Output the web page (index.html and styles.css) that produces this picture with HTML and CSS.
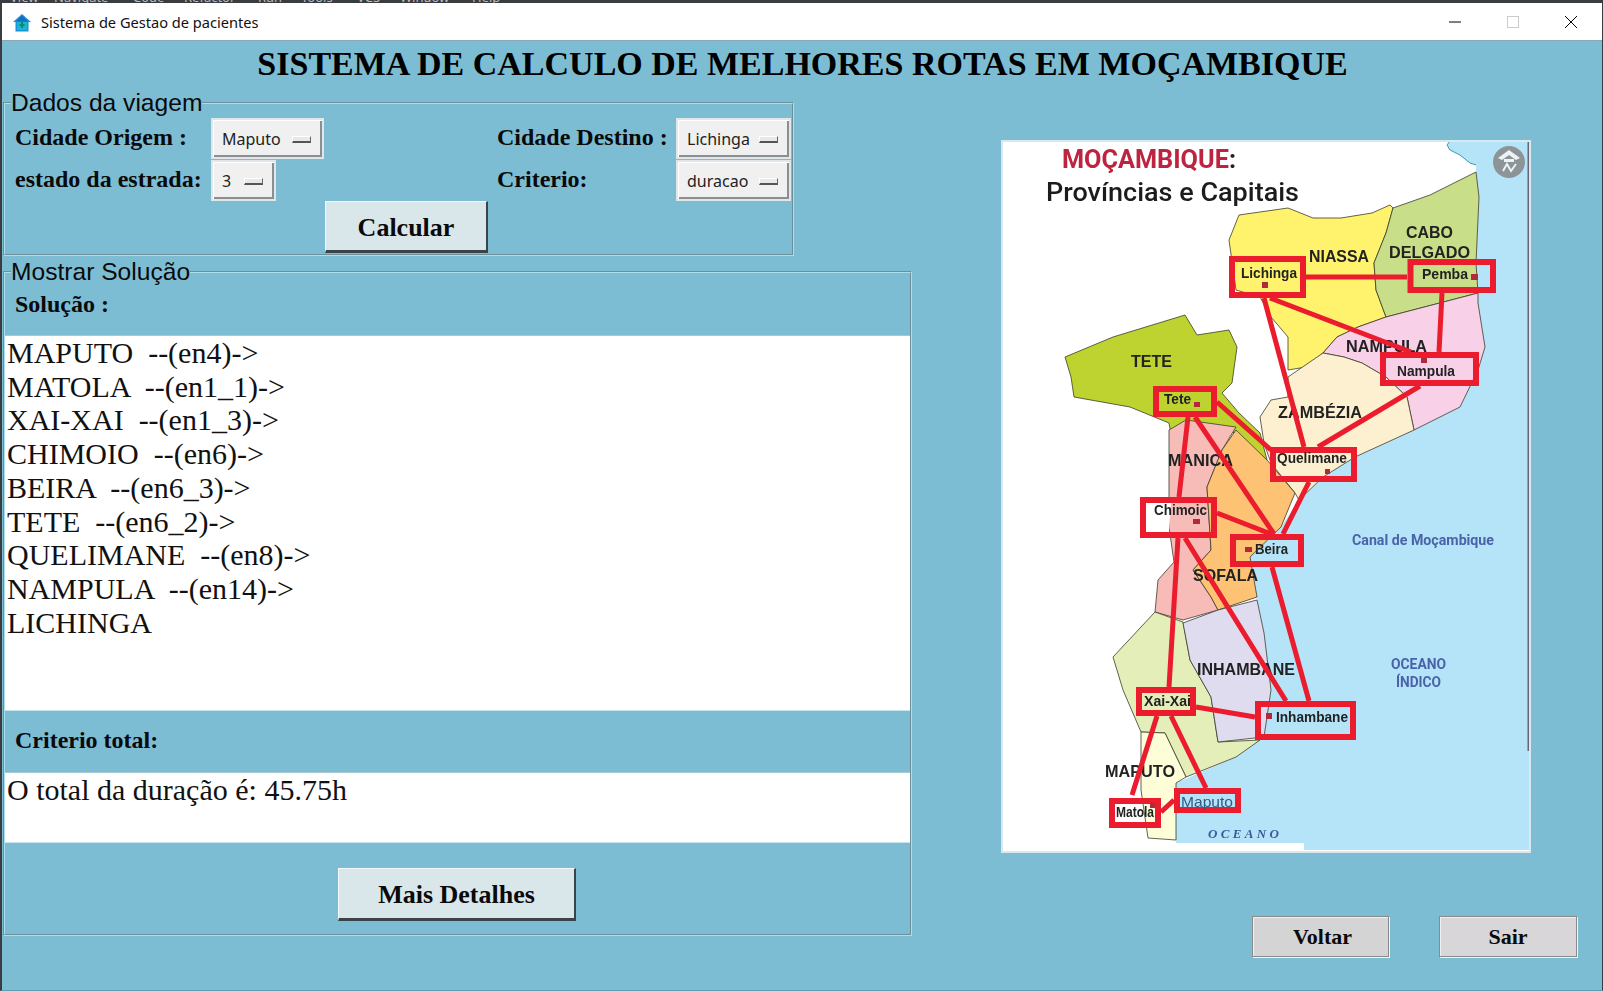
FILE: index.html
```html
<!DOCTYPE html>
<html lang="pt">
<head>
  <meta charset="UTF-8" />
  <title>Sistema de Gestao de pacientes</title>
  <link rel="stylesheet" href="styles.css">
</head>
<body>
<div class="window">

  <!-- IDE menu peeking out behind the window -->
  <div class="behind">
    <span style="width:44px">View</span><span style="width:79px">Navigate</span><span style="width:51px">Code</span><span style="width:74px">Refactor</span><span style="width:43px">Run</span><span style="width:56px">Tools</span><span style="width:43px">VCS</span><span style="width:72px">Window</span><span style="width:70px">Help</span>
  </div>

  <div class="titlebar">
    <svg class="app-icon" viewBox="0 0 18 18">
      <path d="M9 0 L18 8 L15.500 8 L15.500 17.500 L2.500 17.500 L2.500 8 L0 8 Z" fill="#1c8fe0"/>
      <path d="M9 1.500 L15 7.500 L3 7.500 Z" fill="#0f6fc0"/>
      <rect x="4" y="8" width="10" height="8" fill="#18b8c8"/>
      <path d="M9 8 V14 M6.500 11 H11.500" stroke="#0a8a70" stroke-width="2"/>
    </svg>
    <span class="app-name">Sistema de Gestao de pacientes</span>
    <div class="win-controls">
      <svg viewBox="0 0 12 12"><path d="M0 6 H12" stroke="#000" stroke-width="1"/></svg>
      <svg viewBox="0 0 12 12"><rect x="0.500" y="0.500" width="11" height="11" fill="none" stroke="#ccc"/></svg>
      <svg viewBox="0 0 12 12"><path d="M0 0 L12 12 M12 0 L0 12" stroke="#000" stroke-width="1"/></svg>
    </div>
  </div>

  <div class="main">
    <h1 class="page-title">SISTEMA DE CALCULO DE MELHORES ROTAS EM MOÇAMBIQUE</h1>

    <div class="columns">
      <div class="left-col">

        <!-- Dados da viagem -->
        <fieldset class="group group-dados">
          <legend>Dados da viagem</legend>
          <div class="form-grid">
            <label class="lbl">Cidade Origem :</label>
            <div class="optmenu menu-wide"><span>Maputo</span><i class="ind"></i></div>
            <label class="lbl">Cidade Destino :</label>
            <div class="optmenu menu-right"><span>Lichinga</span><i class="ind"></i></div>
            <label class="lbl">estado da estrada:</label>
            <div class="optmenu menu-small"><span>3</span><i class="ind"></i></div>
            <label class="lbl">Criterio:</label>
            <div class="optmenu menu-right"><span>duracao</span><i class="ind"></i></div>
          </div>
          <button class="btn btn-calc">Calcular</button>
        </fieldset>

        <!-- Mostrar Solucao -->
        <fieldset class="group group-solucao">
          <legend>Mostrar Solução</legend>
          <div class="lbl row-solucao">Solução :</div>
          <div class="output output-rota">MAPUTO  --(en4)-&gt;
MATOLA  --(en1_1)-&gt;
XAI-XAI  --(en1_3)-&gt;
CHIMOIO  --(en6)-&gt;
BEIRA  --(en6_3)-&gt;
TETE  --(en6_2)-&gt;
QUELIMANE  --(en8)-&gt;
NAMPULA  --(en14)-&gt;
LICHINGA</div>
          <div class="lbl row-criterio">Criterio total:</div>
          <div class="output output-total">O total da duração é: 45.75h</div>
          <button class="btn btn-detalhes">Mais Detalhes</button>
        </fieldset>
      </div>

      <div class="right-col">
        <svg class="map" viewBox="1002 141 528 711">
          <rect x="1002" y="141" width="528" height="711" fill="#fff"/>
          <polygon fill="#b5e3f8" points="1450,141 1447,145 1450,150 1460,155 1470,163 1476,165 1476,172 1479,197 1476,263 1478,303 1485,347 1478,370 1460,407 1414,430 1355,457 1323,477 1299,500 1281,527 1250,557 1257,600 1264,633 1271,690 1264,737 1236,757 1176,783 1176,843 1304,843 1304,850 1530,850 1530,141"/>

          <g stroke="#3b3b2b" stroke-width="0.800" stroke-linejoin="round">
            <polygon fill="#fff36d" points="1229,240 1239,215 1288,208 1313,218 1341,218 1372,213 1390,205 1393,208 1386,233 1374,263 1376,290 1386,317 1358,327 1337,337 1323,353 1306,367 1288,370 1288,337 1271,317 1260,297 1236,290"/>
            <polygon fill="#c9de88" points="1476,172 1479,197 1476,263 1478,293 1386,317 1376,290 1374,263 1386,233 1393,208 1430,195"/>
            <polygon fill="#f8d0e8" points="1323,353 1337,337 1358,327 1386,317 1478,293 1478,303 1485,347 1478,370 1460,407 1414,430 1407,397 1386,377 1362,363 1344,357"/>
            <polygon fill="#fdf0d0" points="1288,377 1323,353 1344,357 1362,363 1386,377 1407,397 1414,430 1355,457 1323,477 1299,500 1295,493 1271,463 1264,443 1260,417 1271,400 1288,397"/>
            <polygon fill="#bed32f" points="1065,357 1113,337 1185,315 1197,335 1229,330 1237,347 1232,383 1222,393 1239,413 1260,433 1267,460 1236,433 1222,430 1183,447 1172,440 1169,423 1130,407 1074,397 1071,377"/>
            <polygon fill="#f7bcb8" points="1186,420 1236,427 1222,450 1207,487 1211,550 1193,570 1211,597 1218,610 1183,620 1155,612 1158,580 1174,562 1169,527 1169,430"/>
            <polygon fill="#fdc274" points="1236,430 1267,460 1295,493 1281,527 1250,557 1257,597 1218,610 1211,597 1193,570 1211,550 1207,487 1222,450"/>
            <polygon fill="#e4eeb8" points="1155,612 1183,622 1190,660 1211,697 1218,742 1260,740 1236,757 1186,777 1165,733 1141,732 1123,690 1113,657"/>
            <polygon fill="#e0dcf0" points="1183,623 1218,610 1257,600 1264,633 1271,690 1264,737 1218,742 1211,697 1190,660"/>
            <polygon fill="#fdfdd8" points="1141,732 1165,733 1186,777 1176,783 1176,840 1148,838 1141,790"/>
          </g>
          <path d="M1450,141 L1447,145 L1450,150 L1460,155 L1470,163 L1476,165" fill="none" stroke="#3a9ab0" stroke-width="1"/>
          <rect x="1527.500" y="141" width="1.500" height="610" fill="#667"/>

          <text class="m-title" x="1062" y="168" textLength="174" lengthAdjust="spacingAndGlyphs">MOÇAMBIQUE<tspan fill="#222">:</tspan></text>
          <text class="m-sub" x="1046" y="201" textLength="253" lengthAdjust="spacingAndGlyphs">Províncias e Capitais</text>

          <g class="m-reg">
            <text x="1309" y="262" textLength="60" lengthAdjust="spacingAndGlyphs">NIASSA</text>
            <text x="1406" y="238" textLength="47" lengthAdjust="spacingAndGlyphs">CABO</text>
            <text x="1389" y="258" textLength="81" lengthAdjust="spacingAndGlyphs">DELGADO</text>
            <text x="1346" y="352" textLength="81" lengthAdjust="spacingAndGlyphs">NAMPULA</text>
            <text x="1131" y="367" textLength="41" lengthAdjust="spacingAndGlyphs">TETE</text>
            <text x="1278" y="418" textLength="84" lengthAdjust="spacingAndGlyphs">ZAMBÉZIA</text>
            <text x="1168" y="466" textLength="65" lengthAdjust="spacingAndGlyphs">MANICA</text>
            <text x="1193" y="581" textLength="65" lengthAdjust="spacingAndGlyphs">SOFALA</text>
            <text x="1197" y="675" textLength="98" lengthAdjust="spacingAndGlyphs">INHAMBANE</text>
            <text x="1105" y="777" textLength="70" lengthAdjust="spacingAndGlyphs">MAPUTO</text>
          </g>

          <g class="m-routes">
            <path d="M1306,277 H1407 M1270,298 L1411,352 M1264,298 L1304,447 M1442,293 L1439,352 M1420,386 L1318,447 M1217,402 L1271,450 M1188,417 L1179,497 M1195,417 L1274,534 M1309,482 L1283,534 M1217,513 L1271,534 M1178,538 L1169,687 M1185,538 L1286,701 M1272,567 L1309,701 M1196,707 L1255,717 M1157,716 L1132,795 M1171,716 L1206,788 M1161,812 L1174,800"/>
            <rect x="1232" y="259" width="71" height="36"/>
            <rect x="1410.500" y="262" width="82.500" height="28"/>
            <rect x="1383" y="355" width="93" height="28"/>
            <rect x="1156" y="389" width="58" height="25"/>
            <rect x="1273" y="450" width="81" height="29"/>
            <rect x="1143" y="500" width="71" height="35"/>
            <rect x="1233" y="537" width="68" height="27"/>
            <rect x="1139" y="690" width="54" height="23"/>
            <rect x="1258" y="704" width="95" height="33"/>
            <rect x="1177" y="791" width="61" height="19"/>
            <rect x="1112" y="801" width="46" height="24"/>
          </g>

          <path fill="#fff" d="M1146,503 H1171 L1169,532 H1146 Z M1115,804 H1141 L1142,822 H1115 Z"/>

          <g class="m-city">
            <text x="1241" y="278" textLength="56" lengthAdjust="spacingAndGlyphs">Lichinga</text>
            <text x="1422" y="279" textLength="46" lengthAdjust="spacingAndGlyphs">Pemba</text>
            <text x="1397" y="376" textLength="58" lengthAdjust="spacingAndGlyphs">Nampula</text>
            <text x="1164" y="404" textLength="27" lengthAdjust="spacingAndGlyphs">Tete</text>
            <text x="1277" y="463" textLength="70" lengthAdjust="spacingAndGlyphs">Quelimane</text>
            <text x="1154" y="515" textLength="53" lengthAdjust="spacingAndGlyphs">Chimoic</text>
            <text x="1255" y="554" textLength="33" lengthAdjust="spacingAndGlyphs">Beira</text>
            <text x="1144" y="706" textLength="47" lengthAdjust="spacingAndGlyphs">Xai-Xai</text>
            <text x="1276" y="722" textLength="72" lengthAdjust="spacingAndGlyphs">Inhambane</text>
            <text x="1116" y="817" textLength="38" lengthAdjust="spacingAndGlyphs" font-size="12">Matola</text>
          </g>
          <text class="m-maputo" x="1181" y="807" textLength="52" lengthAdjust="spacingAndGlyphs">Maputo</text>

          <g fill="#b22a3a">
            <rect x="1262" y="282" width="6" height="6"/>
            <rect x="1471" y="274" width="7" height="6"/>
            <rect x="1421" y="358" width="6" height="5"/>
            <rect x="1194" y="402" width="6" height="5"/>
            <rect x="1325" y="469" width="5" height="5"/>
            <rect x="1193" y="519" width="7" height="5"/>
            <rect x="1245" y="547" width="7" height="5"/>
            <rect x="1266" y="713" width="6" height="6"/>
            <rect x="1150" y="803" width="5" height="5"/>
          </g>

          <g class="m-sea">
            <text x="1352" y="545" textLength="142" lengthAdjust="spacingAndGlyphs">Canal de Moçambique</text>
            <text x="1391" y="669" textLength="55" lengthAdjust="spacingAndGlyphs">OCEANO</text>
            <text x="1396" y="687" textLength="45" lengthAdjust="spacingAndGlyphs">ÍNDICO</text>
          </g>
          <text class="m-ocean" x="1208" y="838" textLength="71">OCEANO</text>

          <circle cx="1509" cy="162" r="16" fill="#8c9498"/>
          <path d="M1498,158 L1509,150 L1520,158 L1516,160 L1509,155 L1502,160 Z" fill="#eef2f4"/>
          <path d="M1504,159 H1514 V162 H1504 Z" fill="#eef2f4"/>
          <path d="M1503,171 L1507,164 L1511,171 L1516,164" fill="none" stroke="#eef2f4" stroke-width="2"/>
        </svg>

        <div class="bottom-btns">
          <button class="btn-flat btn-voltar">Voltar</button>
          <button class="btn-flat btn-sair">Sair</button>
        </div>
      </div>
    </div>
  </div>
</div>
</body>
</html>
```

FILE: styles.css
```css
html, body {
  margin: 0;
  padding: 0;
}

body {
  width: 1603px;
  height: 991px;
  overflow: hidden;
}

.window {
  width: 1603px;
  height: 991px;
  background: #7dbdd4;
  display: flex;
  flex-direction: column;
  border-left: 2px solid #3a3d40;
  border-right: 1px solid #3a3d40;
  border-bottom: 1px solid #5f9db3;
  box-sizing: border-box;
}

/* Strip of the window behind */
.behind {
  height: 3px;
  margin-left: -2px;
  background: #3a3d40;
  overflow: hidden;
  display: flex;
  padding-left: 10px;
  font: 13px/1 "Noto Sans", sans-serif;
  color: #b8bcc0;
}

.behind span {
  margin-top: -9px;
}

/* Title bar */
.titlebar {
  height: 38px;
  background: white;
  display: flex;
  align-items: center;
  flex-shrink: 0;
  border-bottom: 1px solid #8aa9b5;
  box-sizing: border-box;
}

.app-icon {
  width: 18px;
  height: 18px;
  margin-left: 11px;
  margin-top: 2px;
}

.app-name {
  margin-left: 10px;
  font: 14.600px "Noto Sans", sans-serif;
  color: #111;
}

.win-controls {
  margin-left: auto;
  display: flex;
  gap: 46px;
  margin-right: 25px;
}

.win-controls svg {
  width: 12px;
  height: 12px;
}

/* Main area */
.main {
  flex: 1;
  padding-left: 1px;
}

.page-title {
  margin: 0;
  height: 48px;
  text-align: center;
  font: bold 34px/46px "Liberation Serif", serif;
  color: #000;
  white-space: nowrap;
}

.columns {
  display: flex;
}

.left-col {
  width: 910px;
  display: flex;
  flex-direction: column;
  align-items: flex-start;
  gap: 2px;
}

/* Groups */
.group {
  margin: 0;
  padding: 0;
  border: 2px groove #a9e0ec;
  box-sizing: border-box;
  min-width: 0;
}

.group legend {
  padding: 0;
  margin-left: 6px;
  font: 24.600px/28px "Liberation Sans", sans-serif;
  color: #0a0a0a;
}

.group-dados {
  width: 791px;
  height: 167px;
}

.group-solucao {
  width: 909px;
  height: 678px;
}

.lbl {
  font: bold 24px "Liberation Serif", serif;
  color: #0a0a0a;
}

/* Form */
.form-grid {
  display: grid;
  grid-template-columns: 196px 286px 179px 115px;
  grid-auto-rows: 41px;
  grid-row-gap: 1px;
  align-items: center;
  margin-top: 1px;
  margin-left: 10px;
  white-space: nowrap;
}

.form-grid .lbl {
  padding-bottom: 2px;
}

.optmenu {
  height: 41px;
  box-sizing: border-box;
  background: #f0f0f0;
  border: 2px solid #e0e6ea;
  box-shadow: inset 1px 1px 0 #fff, inset -2px -2px 0 #8a8f92;
  display: flex;
  align-items: center;
  justify-content: space-between;
  padding: 1px 11px 0 9px;
  font: 16px "Noto Sans", sans-serif;
  color: #222;
}

.menu-wide { width: 113px; }
.menu-small { width: 65px; }
.menu-right { width: 115px; }

.ind {
  display: block;
  width: 19px;
  height: 7px;
  box-sizing: border-box;
  background: #e8e8e8;
  border: 1px solid #fff;
  border-right-color: #666;
  border-bottom: 2px solid #555;
}

.btn {
  display: block;
  background: #d9e6ea;
  border: none;
  border-top: 1px solid #f4f8fa;
  border-left: 1px solid #f4f8fa;
  border-right: 2px solid #3a4448;
  border-bottom: 3px solid #3a4448;
  box-sizing: border-box;
  font-family: "Liberation Serif", serif;
  font-weight: bold;
  color: #0a0a0a;
  padding: 3px 0 0;
}

.btn-calc {
  width: 163px;
  height: 52px;
  margin-left: 320px;
  font-size: 26px;
}

.row-solucao {
  height: 49px;
  line-height: 37px;
  padding-left: 10px;
  box-sizing: border-box;
}

.output {
  background: white;
  font: 30px/33.700px "Liberation Serif", serif;
  color: #111;
  white-space: pre;
  padding-left: 2px;
  box-sizing: border-box;
  border-top: 1px solid #a8c8d4;
  border-bottom: 1px solid #c8e4ec;
}

.output-rota {
  height: 376px;
}

.row-criterio {
  height: 61px;
  line-height: 59px;
  padding-left: 10px;
  box-sizing: border-box;
}

.output-total {
  height: 71px;
}

.btn-detalhes {
  width: 238px;
  height: 53px;
  margin: 25px 0 0 333px;
  font-size: 26px;
}

/* Right side */
.right-col {
  margin-left: 89px;
  padding-top: 52px;
}

.map {
  display: block;
  width: 528px;
  height: 711px;
  outline: 2px solid #d8e8ee;
  outline-offset: -1px;
  filter: blur(0.4px);
}

.m-title {
  font: bold 25px "Roboto", sans-serif;
  fill: #bd2440;
}

.m-sub {
  font: 500 25px "Roboto", sans-serif;
  fill: #1c1c1c;
}

.m-reg text {
  font: bold 17px "Liberation Sans", sans-serif;
  fill: #222;
}

.m-city text {
  font-family: "Liberation Sans", sans-serif;
  font-weight: bold;
  font-size: 14px;
  fill: #222;
}

.m-maputo {
  font: 15px "Liberation Sans", sans-serif;
  fill: #2f5a86;
}

.m-sea text {
  font: bold 14px "Roboto", sans-serif;
  fill: #4a63a8;
}

.m-ocean {
  font: italic bold 13px "Liberation Serif", serif;
  fill: #3d5a98;
}

.m-routes path {
  fill: none;
  stroke: #ea1c2d;
  stroke-width: 5;
}

.m-routes rect {
  fill: none;
  stroke: #ea1c2d;
  stroke-width: 6;
}

.bottom-btns {
  display: flex;
  gap: 50px;
  margin: 64px 0 0 250px;
}

.btn-flat {
  width: 137px;
  height: 41px;
  box-sizing: border-box;
  background: #d4d4d4;
  border: 1px solid #8a8a8a;
  box-shadow: inset 1px 1px 0 #f0f0f0, 1px 1px 0 #f4f4f4;
  font: bold 22px "Liberation Serif", serif;
  color: #0a0a0a;
  padding: 0;
}

.btn-voltar {
  padding-left: 4px;
}

.btn-sair {
  width: 138px;
  background: #d8d6d8;
}
```
